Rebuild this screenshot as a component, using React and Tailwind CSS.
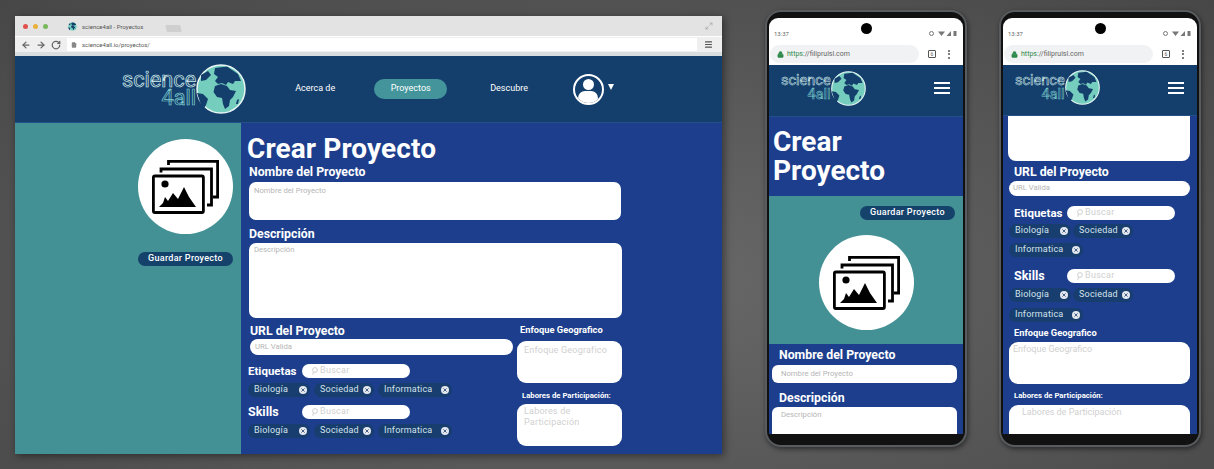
import React from "react";
import { ArrowLeft, ArrowRight, RotateCw, Menu, Maximize2, File, Lock } from "lucide-react";

const Globe = ({ size }) => (
  <svg width={size} height={size} viewBox="0 0 100 100" className="shrink-0">
    <circle cx="50" cy="50" r="48" fill="#74cdbd" stroke="#e8f6f4" strokeWidth="3" />
    <path
      d="M38 8 L62 5 L84 20 L90 34 L78 34 L74 40 L64 36 L60 42 L52 38 L44 40 L38 34 L44 26 L36 20 Z"
      fill="#143e6b"
    />
    <path
      d="M38 44 L50 40 L62 44 L68 52 L80 54 L74 66 L68 72 L66 84 L58 90 L54 80 L52 68 L42 66 L35 56 Z"
      fill="#143e6b"
    />
    <path d="M2 58 L14 60 L24 70 L20 82 L14 92 L8 76 Z" fill="#143e6b" />
    <path d="M10 22 L24 14 L30 22 L20 32 L10 34 Z" fill="#143e6b" />
    <path d="M82 72 L86 70 L84 80 L80 80 Z" fill="#143e6b" />
  </svg>
);

const Logo = ({ small }) => (
  <div className="flex items-center">
    <div
      className={`flex flex-col items-end font-normal text-transparent ${
        small
          ? "text-[14.5px] leading-[14px] [-webkit-text-stroke:0.5px_#d5eeee]"
          : "text-[21.7px] leading-[18px] [-webkit-text-stroke:0.7px_#d5eeee]"
      }`}
    >
      <span>science</span>
      <span className="[-webkit-text-stroke-color:#7fcfd0]">4all</span>
    </div>
    <Globe size={small ? 35 : 50} />
  </div>
);

const GalleryIcon = ({ className }) => (
  <svg viewBox="0 0 67 54" className={className} fill="none" stroke="#000">
    <rect x="1.4" y="16" width="50" height="36.5" rx="1.5" strokeWidth="2.8" />
    <path d="M9 12.5 V9 H59.5 V45 H55" strokeWidth="2.8" />
    <path d="M16.5 5 V1.4 H65.6 V37 H61" strokeWidth="2.8" />
    <circle cx="13" cy="24" r="3.6" fill="#000" stroke="none" />
    <path d="M7 47 L11 43 L13 37 L16 41 L21 33 L26 39 L32 27 L37 37 L44 47 Z" fill="#000" stroke="none" />
  </svg>
);

const GalleryCircle = () => (
  <div className="w-[95px] h-[95px] rounded-full bg-white flex items-center justify-center">
    <GalleryIcon className="w-[67px] h-[54px]" />
  </div>
);

const SaveButton = () => (
  <div className="w-[95px] h-[14px] rounded-full bg-[#14426b] text-white text-[9px] font-medium tracking-[0.3px] flex items-center justify-center">
    Guardar Proyecto
  </div>
);

const Chip = ({ label, className }) => (
  <div className={`h-[14px] rounded-full bg-[#173e6e] text-[#d5e2ec] text-[9px] tracking-[0.2px] flex items-center justify-between pl-[6px] pr-[3px] ${className}`}>
    <span>{label}</span>
    <span className="w-[8px] h-[8px] rounded-full bg-[#e4e8ee] text-[#33507a] flex items-center justify-center">
      <svg width="4" height="4" viewBox="0 0 4 4" stroke="currentColor" strokeWidth="0.9">
        <path d="M0.4 0.4 L3.6 3.6 M3.6 0.4 L0.4 3.6" />
      </svg>
    </span>
  </div>
);

const Search = () => (
  <div className="h-[14px] w-[108px] rounded-full bg-white flex items-center pl-[9px] gap-[2px] text-[#cfcfcf] text-[9px] tracking-[0.3px]">
    <svg width="7" height="8" viewBox="0 0 7 8" fill="none" stroke="#c4c4c4" strokeWidth="0.8">
      <circle cx="4" cy="3" r="2.4" />
      <path d="M2.4 5 L1.8 7.8" />
    </svg>
    <span>Buscar</span>
  </div>
);

const Label = ({ children, className, size = "text-[12.3px]" }) => (
  <div className={`text-white font-bold leading-[14px] ${size} ${className}`}>{children}</div>
);

const Field = ({ text, className }) => (
  <div className={`bg-white text-[#b5b5b5] text-[7.7px] leading-[9px] ${className}`}>{text}</div>
);

const BrowserWindow = () => (
  <div className="w-[707px] h-[438px] shrink-0 flex flex-col overflow-hidden shadow-[2px_2px_8px_rgba(0,0,0,0.45)]">
    <div className="h-[20px] bg-[#e3e3e3] flex items-center pl-[8px] pr-[9px] shrink-0">
      <span className="w-[5px] h-[5px] rounded-full bg-[#e0504c]" />
      <span className="w-[5px] h-[5px] rounded-full bg-[#eab03c] ml-[5px]" />
      <span className="w-[5px] h-[5px] rounded-full bg-[#78b85a] ml-[5px]" />
      <span className="ml-[20px]">
        <Globe size={9} />
      </span>
      <span className="ml-[5px] text-[6px] text-[#555]">science4all - Proyectos</span>
      <span className="ml-[23px] mt-[4px] w-[15px] h-[7px] bg-[#cfcfcf] rounded-[1px] skew-x-12" />
      <Maximize2 size={8} className="ml-auto text-[#a5a5a5]" strokeWidth={2} />
    </div>
    <div className="h-[20px] bg-[#efefef] border-t border-t-white border-b-[4px] border-b-[#d8dde0] flex items-center pl-[6px] pr-[9px] shrink-0">
      <ArrowLeft size={10} className="text-[#666]" strokeWidth={3} />
      <ArrowRight size={10} className="text-[#666] ml-[5px]" strokeWidth={3} />
      <RotateCw size={10} className="text-[#666] ml-[5px]" strokeWidth={3} />
      <div className="ml-[6px] w-[630px] h-[13px] bg-white flex items-center pl-[4px] gap-[5px] text-[6px] text-[#555]">
        <File size={6} className="text-[#888]" fill="#888" />
        <span>science4all.io/proyectos/</span>
      </div>
      <Menu size={9} className="ml-auto text-[#555]" strokeWidth={3} />
    </div>
    <div className="h-[67px] bg-[#143e6b] border-b border-b-[#24508a] flex items-center pl-[107px] shrink-0 text-white text-[9px]">
      <Logo />
      <span className="ml-[49px]">Acerca de</span>
      <span className="ml-[39px] w-[73px] h-[20px] rounded-full bg-[#43959b] flex items-center justify-center">Proyectos</span>
      <span className="ml-[43px]">Descubre</span>
      <div className="ml-[45px] w-[31px] h-[31px] rounded-full border-2 border-white overflow-hidden flex flex-col items-center justify-start pt-[3px] gap-[1px]">
        <span className="w-[11px] h-[11px] rounded-full bg-white shrink-0" />
        <span className="w-[20px] h-[14px] rounded-full bg-white shrink-0" />
      </div>
      <span className="ml-[4px] -mt-[4px] w-0 h-0 border-x-[3.5px] border-x-transparent border-t-[6px] border-t-white" />
    </div>
    <div className="flex-1 flex min-h-0">
      <div className="w-[226px] bg-[#439194] flex flex-col items-end pr-[8px] pt-[16px] gap-[18px]">
        <GalleryCircle />
        <SaveButton />
      </div>
      <div className="flex-1 bg-[#1c3e8c] pl-[8px] flex flex-col">
        <div className="text-white font-bold text-[28px] leading-[32px] mt-[10px] tracking-[0.1px] -ml-[2px]">Crear Proyecto</div>
        <Label>Nombre del Proyecto</Label>
        <Field text="Nombre del Proyecto" className="w-[372px] h-[38px] rounded-[7px] mt-[3px] p-[4px_5px]" />
        <Label className="mt-[7px]">Descripción</Label>
        <Field text="Descripción" className="w-[373px] h-[75px] rounded-[7px] mt-[2px] p-[2px_5px]" />
        <div className="flex mt-[6px]">
          <div className="w-[268px]">
            <Label className="ml-[1px]">URL del Proyecto</Label>
            <Field text="URL Valida" className="w-[263px] h-[16px] rounded-full mt-[1px] ml-[1px] px-[5px] py-[3px]" />
            <div className="flex items-center mt-[9px] -ml-[1px]">
              <Label className="w-[54px]" size="text-[11.5px]">Etiquetas</Label>
              <Search />
            </div>
            <div className="flex gap-[4px] mt-[5px] -ml-[1px]">
              <Chip label="Biología" className="w-[62px]" />
              <Chip label="Sociedad" className="w-[60px]" />
              <Chip label="Informatica" className="w-[74px]" />
            </div>
            <div className="flex items-center mt-[8px] -ml-[1px]">
              <Label className="w-[54px]" size="text-[12.5px]">Skills</Label>
              <Search />
            </div>
            <div className="flex gap-[4px] mt-[5px] -ml-[1px]">
              <Chip label="Biología" className="w-[62px]" />
              <Chip label="Sociedad" className="w-[60px]" />
              <Chip label="Informatica" className="w-[74px]" />
            </div>
          </div>
          <div className="w-[105px]">
            <div className="text-white font-bold text-[9.3px] leading-[12px] ml-[3px]">Enfoque Geografico</div>
            <div className="bg-white rounded-[9px] h-[42px] mt-[5px] text-[#d0d0d0] text-[9px] leading-[11px] px-[7px] py-[4px] tracking-[0.2px]">Enfoque Geografico</div>
            <div className="text-white font-bold text-[7.75px] leading-[10px] mt-[8px] ml-[5px]">Labores de Participación:</div>
            <div className="bg-white rounded-[9px] h-[42px] mt-[3px] text-[#d0d0d0] text-[9px] leading-[11px] px-[7px] py-[2px] tracking-[0.2px]">Labores de Participación</div>
          </div>
        </div>
      </div>
    </div>
  </div>
);

const StatusIcons = () => (
  <svg width="29" height="7" viewBox="0 0 29 7" fill="#777">
    <circle cx="3.5" cy="3.5" r="2" fill="none" stroke="#777" />
    <path d="M10 1.5 H17 L13.5 6 Z" />
    <path d="M23 1 V6 H18.5 Z" />
    <rect x="25.5" y="1" width="3" height="5" />
  </svg>
);

const PhoneFrame = ({ children, navClass, className }) => (
  <div className={`w-[202px] h-[437px] shrink-0 rounded-[16px] bg-[#111] border-2 border-[#585c5e] shadow-[1px_2px_5px_rgba(0,0,0,0.5)] px-[2px] pt-[6px] -mt-[6px] ${className}`}>
    <div className="relative h-[416px] rounded-t-[9px] overflow-hidden bg-white flex flex-col">
      <div className="absolute left-[92px] top-[5px] w-[11px] h-[11px] rounded-full bg-black" />
      <div className="h-[25px] flex items-center justify-between pl-[5px] pr-[6px] pt-[5px] text-[6px] text-[#666] shrink-0">
        <span>13:37</span>
        <StatusIcons />
      </div>
      <div className="h-[22px] flex items-center pl-[1px] shrink-0">
        <div className="w-[149px] h-[18px] rounded-full bg-[#f1f2f3] flex items-center pl-[7px] gap-[3px] text-[7px] text-[#666]">
          <Lock size={7} className="text-[#2f8a4c]" fill="#2f8a4c" />
          <span><span className="text-[#2f8a4c]">https:</span>//filipruisl.com</span>
        </div>
        <span className="ml-[9px] w-[8px] h-[8px] border border-[#555] rounded-[1px] text-[5px] leading-[6px] text-center text-[#555]">6</span>
        <span className="ml-[12px] flex flex-col gap-[1.5px]">
          <span className="w-[2px] h-[2px] rounded-full bg-[#555]" />
          <span className="w-[2px] h-[2px] rounded-full bg-[#555]" />
          <span className="w-[2px] h-[2px] rounded-full bg-[#555]" />
        </span>
      </div>
      <div className={`bg-[#143e6b] border-b border-b-[#24508a] flex items-center justify-between pl-[12px] pr-[12px] pb-[5px] shrink-0 ${navClass}`}>
        <Logo small />
        <div className="flex flex-col gap-[3px] pr-[1px]">
          <span className="w-[16px] h-[2px] bg-white" />
          <span className="w-[16px] h-[2px] bg-white" />
          <span className="w-[16px] h-[2px] bg-white" />
        </div>
      </div>
      {children}
    </div>
  </div>
);

const PhoneOne = () => (
  <PhoneFrame navClass="h-[52px]" className="ml-[43px]">
    <div className="h-[79px] bg-[#1c3e8c] text-white font-bold text-[28px] leading-[29px] pl-[4px] pt-[10px] shrink-0">
      Crear<br />Proyecto
    </div>
    <div className="h-[148px] bg-[#439194] flex flex-col items-center pt-[10px] shrink-0">
      <div className="self-end mr-[8px]">
        <SaveButton />
      </div>
      <div className="mt-[15px]">
        <GalleryCircle />
      </div>
    </div>
    <div className="flex-1 bg-[#1c3e8c] pl-[3px]">
      <Label className="mt-[4px] ml-[7px]">Nombre del Proyecto</Label>
      <Field text="Nombre del Proyecto" className="w-[185px] h-[18px] rounded-[6px] mt-[3px] px-[9px] py-[4px]" />
      <Label className="mt-[8px] ml-[7px]">Descripción</Label>
      <Field text="Descripción" className="w-[185px] h-[40px] rounded-[6px] mt-[2px] px-[9px] py-[3px]" />
    </div>
  </PhoneFrame>
);

const ChipRows = ({ first, second }) => (
  <>
    <div className={`flex gap-[2px] ml-[1px] ${first}`}>
      <Chip label="Biología" className="w-[62px]" />
      <Chip label="Sociedad" className="w-[60px]" />
    </div>
    <div className={`flex ml-[1px] ${second}`}>
      <Chip label="Informatica" className="w-[74px]" />
    </div>
  </>
);

const PhoneTwo = () => (
  <PhoneFrame navClass="h-[51px]" className="ml-[32px]">
    <div className="flex-1 bg-[#1c3e8c] pl-[5px] min-h-0">
      <div className="w-[182px] h-[45px] bg-white rounded-b-[8px]" />
      <Label className="mt-[4px] ml-[6px]">URL del Proyecto</Label>
      <Field text="URL Valida" className="w-[181px] ml-[1px] h-[15px] rounded-full mt-[2px] px-[4px] py-[2px]" />
      <div className="flex items-center mt-[10px] ml-[6px]">
        <Label className="w-[53px]" size="text-[11.5px]">Etiquetas</Label>
        <Search />
      </div>
      <ChipRows first="mt-[4px]" second="mt-[5px]" />
      <div className="flex items-center mt-[12px] ml-[6px]">
        <Label className="w-[53px]" size="text-[12.5px]">Skills</Label>
        <Search />
      </div>
      <ChipRows first="mt-[5px]" second="mt-[6px]" />
      <div className="text-white font-bold text-[9.3px] leading-[12px] mt-[5px] ml-[6px]">Enfoque Geografico</div>
      <div className="w-[181px] ml-[1px] h-[42px] bg-white rounded-[9px] mt-[3px] text-[#d0d0d0] text-[9px] leading-[11px] px-[4px] py-[2px]">Enfoque Geografico</div>
      <div className="text-white font-bold text-[7.75px] leading-[10px] mt-[7px] ml-[6px]">Labores de Participación:</div>
      <div className="w-[181px] ml-[1px] h-[42px] bg-white rounded-[9px] mt-[4px] text-[#d0d0d0] text-[9px] leading-[11px] pl-[13px] py-[2px]">Labores de Participación</div>
    </div>
  </PhoneFrame>
);

export default function App() {
  return (
    <div className="w-[1214px] h-[469px] overflow-hidden flex items-start pl-[15px] pt-[16px] bg-[radial-gradient(ellipse_at_50%_60%,#6a6a6a,#474747)] [font-family:Roboto,sans-serif]">
      <BrowserWindow />
      <PhoneOne />
      <PhoneTwo />
    </div>
  );
}
